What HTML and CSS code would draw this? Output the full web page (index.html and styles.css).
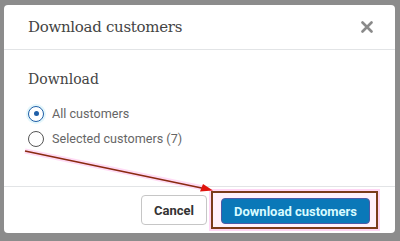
FILE: index.html
```html
<!DOCTYPE html>
<html lang="en">
<head>
  <meta charset="UTF-8">
  <title>Download customers</title>
  <link rel="stylesheet" href="styles.css">
</head>
<body>
  <div class="dialog">
    <div class="header">
      <div class="title">Download customers</div>
      <button class="close" aria-label="Close">
        <svg width="12" height="12" viewBox="0 0 12 12">
          <path d="M1.5 1.5 L10.5 10.5 M10.5 1.5 L1.5 10.5" stroke="#8a8a8a" stroke-width="2.6" stroke-linecap="round"/>
        </svg>
      </button>
    </div>

    <div class="body">
      <div class="label">Download</div>
      <label class="option">
        <span class="radio checked"><span class="dot"></span></span>
        All customers
      </label>
      <label class="option">
        <span class="radio"></span>
        Selected customers (7)
      </label>
    </div>

    <div class="footer">
      <button class="btn cancel">Cancel</button>
      <div class="mark">
        <button class="btn primary">Download customers</button>
      </div>
    </div>

    <svg class="arrow" width="400" height="241" viewBox="0 0 400 241">
      <line x1="25" y1="151" x2="203" y2="188" stroke="#ffccf2" stroke-width="5" opacity="0.7"/>
      <line x1="25" y1="151" x2="204" y2="188.5" stroke="#8a2a10" stroke-width="1.6"/>
      <polygon points="213,190.5 200,191.5 203,184" fill="#e0140e"/>
    </svg>
  </div>
</body>
</html>
```

FILE: styles.css
```css
body {
  margin: 0;
  background: #8c8c8c;
  padding: 5px 5px 8px 4px;
  font-family: Roboto, sans-serif;
}
.dialog {
  background: white;
  width: 391px;
  height: 228px;
  border-radius: 4px;
  display: flex;
  flex-direction: column;
}
.header {
  height: 44px;
  border-bottom: 1px solid #e2e4e6;
  display: flex;
  align-items: center;
  justify-content: space-between;
  padding: 0 22px 0 24px;
}
.title {
  font-family: "DejaVu Serif", serif;
  font-size: 15px;
  color: #444;
  letter-spacing: -0.3px;
}
.close {
  background: none;
  border: none;
  padding: 0;
  display: flex;
  cursor: pointer;
}
.body {
  flex: 1;
  padding: 21px 24px 0 24px;
  display: flex;
  flex-direction: column;
}
.label {
  font-family: "DejaVu Serif", serif;
  font-size: 14px;
  color: #444;
  margin-bottom: 14px;
}
.option {
  display: flex;
  align-items: center;
  gap: 8px;
  font-size: 12.6px;
  color: #666;
  height: 25px;
}
.radio {
  width: 14px;
  height: 14px;
  border: 1.5px solid #555;
  border-radius: 50%;
  display: flex;
  align-items: center;
  justify-content: center;
  background: white;
}
.radio.checked {
  border-color: #1f5fa8;
  box-shadow: 0 0 0 2px #e3f6fb;
}
.dot {
  width: 5px;
  height: 5px;
  border-radius: 50%;
  background: #1f5fa8;
}
.footer {
  height: 46px;
  border-top: 1px solid #e2e4e6;
  display: flex;
  align-items: center;
  justify-content: flex-end;
  gap: 4px;
  padding-right: 17px;
}
.btn {
  font-family: Roboto, sans-serif;
  font-weight: bold;
  font-size: 13px;
  border-radius: 4px;
  cursor: pointer;
}
.cancel {
  background: white;
  color: #333;
  border: 1px solid #c6c6c6;
  height: 30px;
  width: 66px;
}
.mark {
  border: 2px solid #7a3a1a;
  box-shadow: 0 0 0 2px #ffd6f4;
  padding: 5px 6px 3px 8px;
  background: #fff0fb;
}
.primary {
  background: #0a78b8;
  color: #d8fbff;
  border: 1px solid #4a5aa8;
  height: 26px;
  width: 149px;
  display: block;
}
.arrow {
  position: absolute;
  left: 0;
  top: 0;
  pointer-events: none;
}
```
